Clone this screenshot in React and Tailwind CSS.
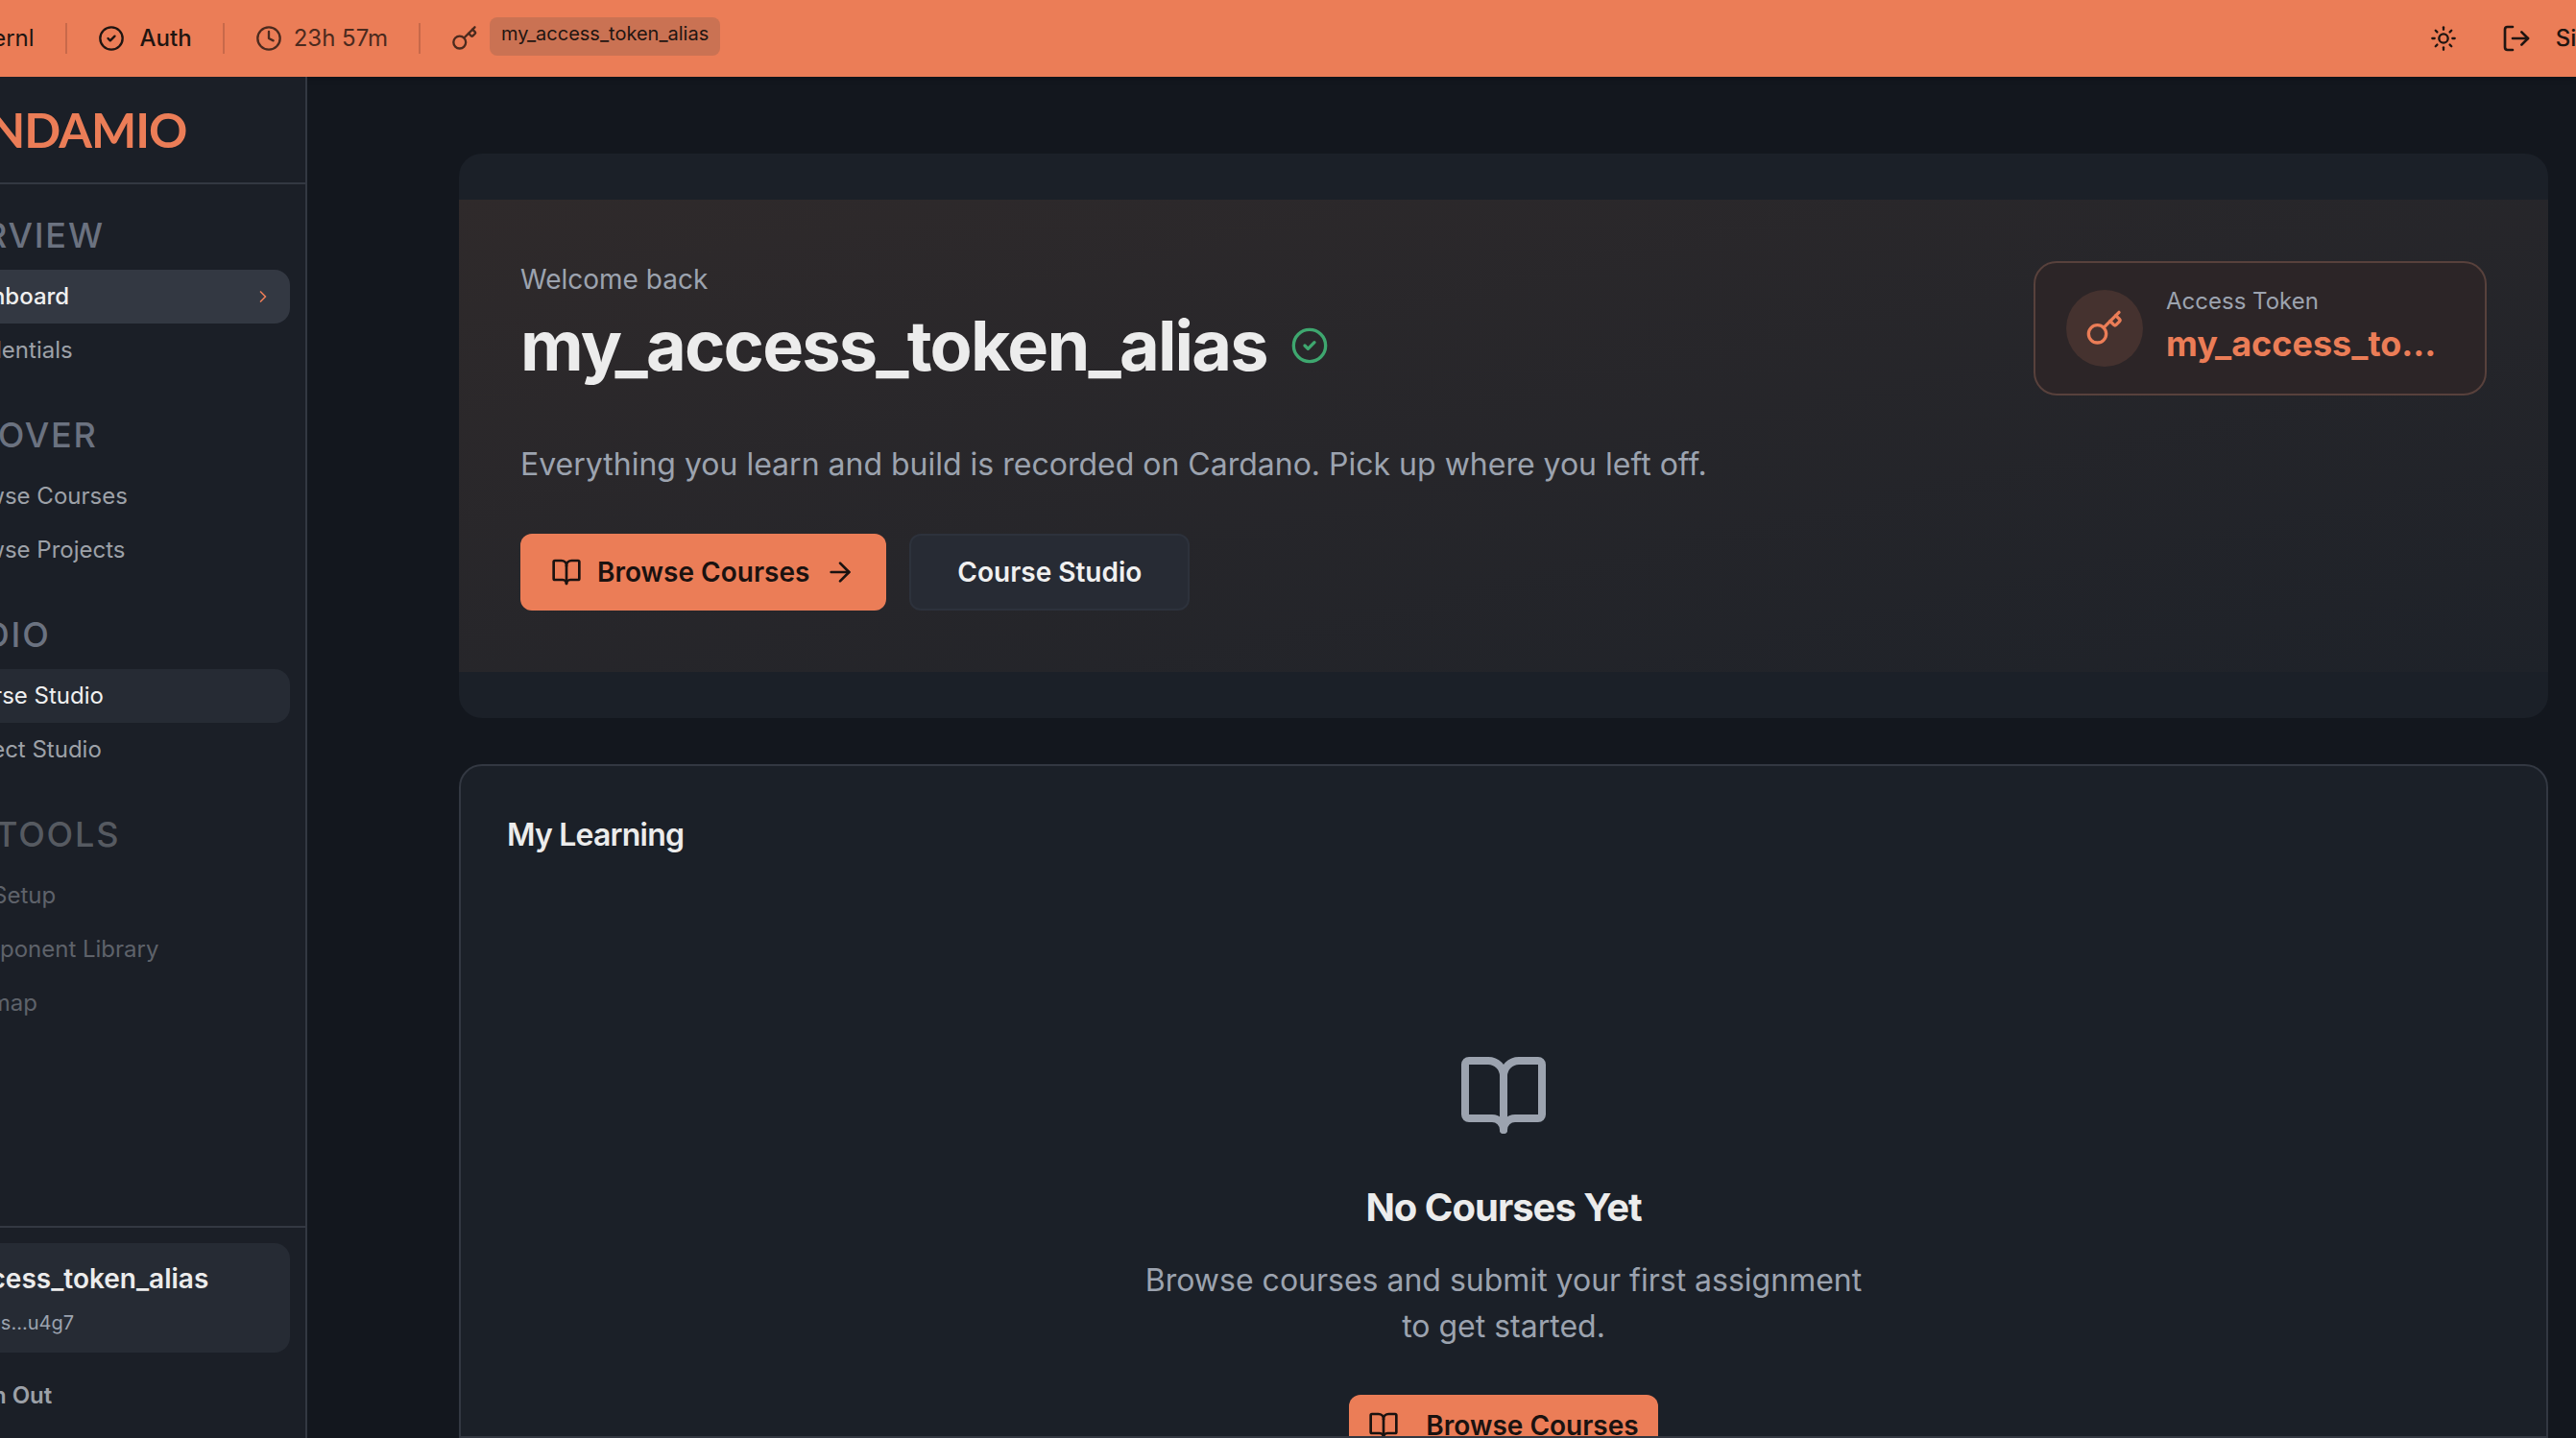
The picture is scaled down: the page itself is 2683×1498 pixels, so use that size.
import { BookOpen, ArrowRight, ChevronRight, CircleCheck, Clock, Key, LogOut, Sun } from "lucide-react";

const font = { fontFamily: "Inter, sans-serif" };

function NavSection({ title, dim, children }) {
  return (
    <div className="mb-[32px]">
      <div className={`h-[56px] flex items-center -ml-[10px] text-[36px] font-medium tracking-wider uppercase whitespace-nowrap ${dim ? "text-[#565a61]" : "text-[#6b7280]"}`}>
        {title}
      </div>
      <div className="mt-[8px] flex flex-col">{children}</div>
    </div>
  );
}

function NavItem({ label, active, strong, dim, chevron }) {
  const tone = strong
    ? "bg-[#333842] text-[#f0f0f0] font-medium"
    : active
      ? "bg-[#262b34] text-[#f0f0f0]"
      : dim
        ? "text-[#5e626a]"
        : "text-[#9da1a8]";
  return (
    <div className={`h-[56px] rounded-[16px] pl-[32px] pr-[18px] flex items-center justify-between text-[24px] whitespace-nowrap ${tone}`}>
      {label}
      {chevron && <ChevronRight size={20} className="text-[#eb7d57]" />}
    </div>
  );
}

function PrimaryButton({ arrow, className, gap }) {
  return (
    <button className={`rounded-[12px] bg-[#eb7d57] text-[#1a1210] text-[28px] font-semibold flex items-center shrink-0 ${className}`}>
      <BookOpen size={32} strokeWidth={2} />
      <span className={gap}>Browse Courses</span>
      {arrow && <ArrowRight size={32} strokeWidth={2} className="ml-[16px]" />}
    </button>
  );
}

export default function App() {
  return (
    <div className="w-[2683px] h-[1498px] overflow-hidden flex flex-col bg-[#13171e]" style={font}>
      <header className="h-[80px] shrink-0 bg-[#eb7d57] text-[#1f1511] flex items-center justify-between shadow-md">
        <div className="flex items-center -ml-[23px]">
          <span className="text-[24px] whitespace-nowrap">Kernl</span>
          <div className="w-[2px] h-[32px] bg-[#c8694a] ml-[32px]" />
          <CircleCheck size={28} strokeWidth={2} className="ml-[32px]" />
          <span className="text-[24px] font-medium ml-[16px]">Auth</span>
          <div className="w-[2px] h-[32px] bg-[#c8694a] ml-[32px]" />
          <Clock size={28} strokeWidth={2} className="ml-[32px] text-[#4b2a1e]" />
          <span className="text-[24px] ml-[12px] text-[#4b2a1e]">23h 57m</span>
          <div className="w-[2px] h-[32px] bg-[#c8694a] ml-[32px]" />
          <Key size={28} strokeWidth={2} className="ml-[32px] text-[#4b2a1e]" />
          <span className="ml-[12px] mb-[4px] h-[40px] w-[240px] rounded-[8px] bg-[#ca7253] px-[12px] pt-[2px] text-[20px] whitespace-nowrap">my_access_token_alias</span>
        </div>
        <div className="flex items-center -mr-[77px]">
          <Sun size={28} strokeWidth={2} />
          <LogOut size={32} strokeWidth={2} className="ml-[46px]" />
          <span className="text-[24px] font-medium ml-[25px] whitespace-nowrap">Sign Out</span>
        </div>
      </header>

      <div className="flex-1 flex min-h-0">
        <aside className="w-[421px] -ml-[101px] shrink-0 bg-[#1b1f27] border-r-2 border-[#333842] flex flex-col">
          <div className="h-[112px] shrink-0 border-b-2 border-[#333842] flex items-center pl-[55px]">
            <span className="text-[50px] font-bold tracking-[-0.02em] text-[#eb7d57] whitespace-nowrap" style={{ fontFamily: "Lato, sans-serif" }}>ANDAMIO</span>
          </div>
          <nav className="flex-1 pl-[16px] pr-[16px] pt-[25px]">
            <NavSection title="Overview">
              <NavItem label="Dashboard" strong chevron />
              <NavItem label="Credentials" />
            </NavSection>
            <NavSection title="Discover">
              <NavItem label="Browse Courses" />
              <NavItem label="Browse Projects" />
            </NavSection>
            <NavSection title="Studio">
              <NavItem label="Course Studio" active />
              <NavItem label="Project Studio" />
            </NavSection>
            <NavSection title="Dev Tools" dim>
              <NavItem label="API Setup" dim />
              <NavItem label="Component Library" dim />
              <NavItem label="Sitemap" dim />
            </NavSection>
          </nav>
          <div className="h-[221px] shrink-0 border-t-2 border-[#333842] px-[16px] pt-[18px]">
            <div className="h-[114px] -mt-[2px] rounded-[16px] bg-[#262b34] pt-[18px]">
              <div className="text-[28px] font-semibold text-[#ececec] -ml-[10px] leading-[38px] whitespace-nowrap">my_access_token_alias</div>
              <div className="text-[20px] text-[#9ca3af] mt-[12px] -ml-[22px] whitespace-nowrap">addr_test1qs...u4g7</div>
            </div>
            <div className="mt-[27px] pl-[40px] text-[24px] font-semibold text-[#9da1a8]">Sign Out</div>
          </div>
        </aside>

        <main className="flex-1 min-w-0 pl-[158px] pr-[29px] pt-[80px] flex flex-col gap-[48px]">
          <section className="rounded-[24px] bg-[#1b2028] py-[48px] shrink-0">
            <div className="bg-gradient-to-br from-[#2f2a2b] to-[#1e2229] p-[64px] flex justify-between items-start">
              <div>
                <p className="text-[28px] text-[#9ca3af] leading-[38px]">Welcome back</p>
                <div className="flex items-center mt-[5px]">
                  <h1 className="text-[72px] font-bold tracking-tight text-[#ececec] leading-[90px]">my_access_token_alias</h1>
                  <CircleCheck size={40} strokeWidth={2} className="ml-[24px] text-[#3ea76f]" />
                </div>
                <p className="text-[32px] text-[#9ca3af] mt-[55px] leading-[48px]">Everything you learn and build is recorded on Cardano. Pick up where you left off.</p>
                <div className="flex gap-[24px] mt-[48px]">
                  <PrimaryButton arrow className="h-[80px] px-[32px]" gap="ml-[16px]" />
                  <button className="h-[80px] w-[292px] rounded-[12px] bg-[#272b34] border-2 border-[#2d323c] text-[#f0f0f0] text-[28px] font-semibold">Course Studio</button>
                </div>
              </div>
              <div className="w-[472px] h-[140px] rounded-[24px] bg-[#2c2527] border-2 border-[#58413c] flex items-center pl-[32px]">
                <div className="w-[80px] h-[80px] rounded-full bg-[#45322f] flex items-center justify-center text-[#eb7d57]">
                  <Key size={40} strokeWidth={2} />
                </div>
                <div className="ml-[24px] mb-[3px]">
                  <div className="text-[24px] text-[#9ca3af]">Access Token</div>
                  <div className="text-[36px] font-bold text-[#eb7d57] -mt-[1px]">my_access_to...</div>
                </div>
              </div>
            </div>
          </section>

          <section className="rounded-t-[24px] bg-[#1b2028] border-2 border-[#333842] flex-1 flex flex-col min-h-0 px-[48px] pt-[50px] overflow-hidden">
            <h2 className="text-[32px] font-semibold tracking-tight text-[#ececec] leading-[44px]">My Learning</h2>
            <div className="flex flex-col items-center mt-[201px]">
              <BookOpen size={96} strokeWidth={2} className="text-[#9ca3af]" />
              <h3 className="text-[40px] font-bold tracking-tight text-[#ececec] mt-[41px] leading-[56px]">No Courses Yet</h3>
              <p className="text-[32px] text-[#9ca3af] text-center mt-[24px] leading-[48px] w-[800px]">Browse courses and submit your first assignment<br />to get started.</p>
              <PrimaryButton className="h-[64px] mt-[47px] px-[20px]" gap="ml-[28px]" />
            </div>
          </section>
        </main>
      </div>
    </div>
  );
}
